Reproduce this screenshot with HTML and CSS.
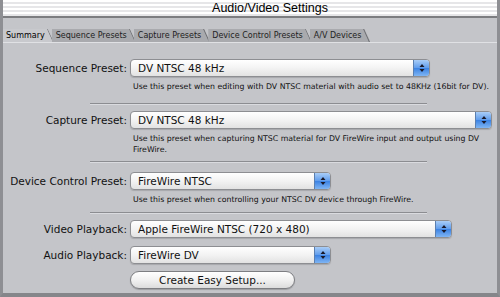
FILE: index.html
```html
<!DOCTYPE html>
<html>
<head>
	<title>Audio/Video Settings</title>
	<link rel="stylesheet" href="styles.css">
</head>
<body>
<div class="window">
	<div class="titlebar">Audio/Video Settings</div>
	<div class="tabs">
		<div class="tab selected">Summary</div>
		<div class="tab">Sequence Presets</div>
		<div class="tab">Capture Presets</div>
		<div class="tab">Device Control Presets</div>
		<div class="tab">A/V Devices</div>
	</div>
	<div class="panel">
		<div class="row first">
			<div class="label">Sequence Preset:</div>
			<div class="popup w1"><span class="value">DV NTSC 48 kHz</span><span class="arrows"><svg width="6" height="10" viewBox="0 0 6 10"><path d="M3 1 L5.5 4 L0.5 4 Z M3 9 L5.5 6 L0.5 6 Z" fill="#1a1a2a"/></svg></span></div>
		</div>
		<p class="desc">Use this preset when editing with DV NTSC material with audio set to 48KHz (16bit for DV).</p>
		<div class="sep s1"></div>

		<div class="row">
			<div class="label">Capture Preset:</div>
			<div class="popup w2"><span class="value">DV NTSC 48 kHz</span><span class="arrows"><svg width="6" height="10" viewBox="0 0 6 10"><path d="M3 1 L5.5 4 L0.5 4 Z M3 9 L5.5 6 L0.5 6 Z" fill="#1a1a2a"/></svg></span></div>
		</div>
		<p class="desc">Use this preset when capturing NTSC material for DV FireWire input and output using DV FireWire.</p>
		<div class="sep"></div>

		<div class="row r3">
			<div class="label">Device Control Preset:</div>
			<div class="popup w3"><span class="value">FireWire NTSC</span><span class="arrows"><svg width="6" height="10" viewBox="0 0 6 10"><path d="M3 1 L5.5 4 L0.5 4 Z M3 9 L5.5 6 L0.5 6 Z" fill="#1a1a2a"/></svg></span></div>
		</div>
		<p class="desc">Use this preset when controlling your NTSC DV device through FireWire.</p>
		<div class="sep s3"></div>

		<div class="row">
			<div class="label">Video Playback:</div>
			<div class="popup w4"><span class="value">Apple FireWire NTSC (720 x 480)</span><span class="arrows"><svg width="6" height="10" viewBox="0 0 6 10"><path d="M3 1 L5.5 4 L0.5 4 Z M3 9 L5.5 6 L0.5 6 Z" fill="#1a1a2a"/></svg></span></div>
		</div>
		<div class="row second">
			<div class="label">Audio Playback:</div>
			<div class="popup w3"><span class="value">FireWire DV</span><span class="arrows"><svg width="6" height="10" viewBox="0 0 6 10"><path d="M3 1 L5.5 4 L0.5 4 Z M3 9 L5.5 6 L0.5 6 Z" fill="#1a1a2a"/></svg></span></div>
		</div>
		<div class="row last">
			<div class="label"></div>
			<div class="button">Create Easy Setup...</div>
		</div>
	</div>
</div>
</body>
</html>
```

FILE: styles.css
```css
body{
	margin:0;
	background:#c4c5c9;
	font-family:"DejaVu Sans", sans-serif;
	color:#111;
}
.window{
	width:500px;
	height:297px;
	box-sizing:border-box;
	border-left:3px solid #8e8f93;
	border-right:3px solid #8e8f93;
	border-bottom:4px solid #85868a;
	background:#c4c5c9;
	overflow:hidden;
}
.titlebar{
	height:16px;
	margin:0 -3px;
	padding-left:40px;
	text-align:center;
	font-family:"Liberation Sans", Arial, sans-serif;
	font-size:12.5px;
	line-height:17px;
	color:#000;
	background:repeating-linear-gradient(to bottom, #ffffff 0px, #ffffff 2px, #e6e6e8 2px, #e6e6e8 4px);
	border-bottom:2px solid #7c7d80;
}
.tabs{
	display:flex;
	margin-top:11px;
	height:13px;
	border-bottom:1px solid #e0e1e4;
}
.tab{
	position:relative;
	font-size:8px;
	line-height:14px;
	padding:0 9px 0 4px;
	background:#a9aaae;
	color:#222;
	clip-path:polygon(0 0, calc(100% - 6px) 0, 100% 100%, 0 100%);
	margin-right:-2px;
}
.tab::after{
	content:"";
	position:absolute;
	top:0;
	right:3px;
	width:1px;
	height:100%;
	background:#6d6e72;
	transform:skewX(24deg);
}
.tab.selected{
	background:#c8c9cd;
	color:#000;
	padding-left:3px;
}
.panel{
	padding-top:16px;
}
.row{
	display:flex;
	align-items:center;
	height:18px;
	margin-top:6px;
}
.row.first{
	margin-top:0;
}
.row.r3{
	margin-top:9px;
}
.row.second{
	margin-top:8px;
}
.row.last{
	margin-top:7px;
}
.label{
	width:124px;
	text-align:right;
	font-size:10.5px;
	padding-right:3px;
}
.popup{
	display:flex;
	align-items:center;
	height:18px;
	box-sizing:border-box;
	border:1px solid #8d8e92;
	border-radius:4px;
	background:linear-gradient(to bottom, #ffffff 0%, #f3f3f3 50%, #e2e2e2 100%);
	box-shadow:0 1px 1px rgba(0,0,0,0.15);
	font-size:10.5px;
	overflow:hidden;
}
.popup .value{
	flex:1;
	padding-left:7px;
	white-space:nowrap;
}
.popup .arrows{
	width:15px;
	height:100%;
	display:flex;
	align-items:center;
	justify-content:center;
	background:linear-gradient(to bottom, #a9cdf7 0%, #5f9cec 50%, #3b82e3 51%, #7fb5f3 100%);
	border-left:1px solid #5a7fb0;
}
.w1{ width:300px; }
.w2{ width:362px; }
.w3{ width:201px; }
.w4{ width:322px; }
.desc{
	margin:4px 0 0 130px;
	font-size:7.8px;
	line-height:11px;
	width:365px;
	color:#111;
}
.sep{
	margin:6px 0 0 87px;
	width:337px;
	height:0;
	border-top:1px solid #8c8d91;
	border-bottom:1px solid #dadbdf;
}
.sep.s1{
	margin-top:11px;
}
.sep.s3{
	margin-top:7px;
}
.button{
	width:165px;
	height:18px;
	box-sizing:border-box;
	border:1px solid #7d7e82;
	border-radius:9px;
	background:linear-gradient(to bottom, #ffffff 0%, #f1f1f1 50%, #dcdcdc 100%);
	box-shadow:0 1px 1px rgba(0,0,0,0.2);
	text-align:center;
	font-size:10.5px;
	line-height:16px;
}
```
